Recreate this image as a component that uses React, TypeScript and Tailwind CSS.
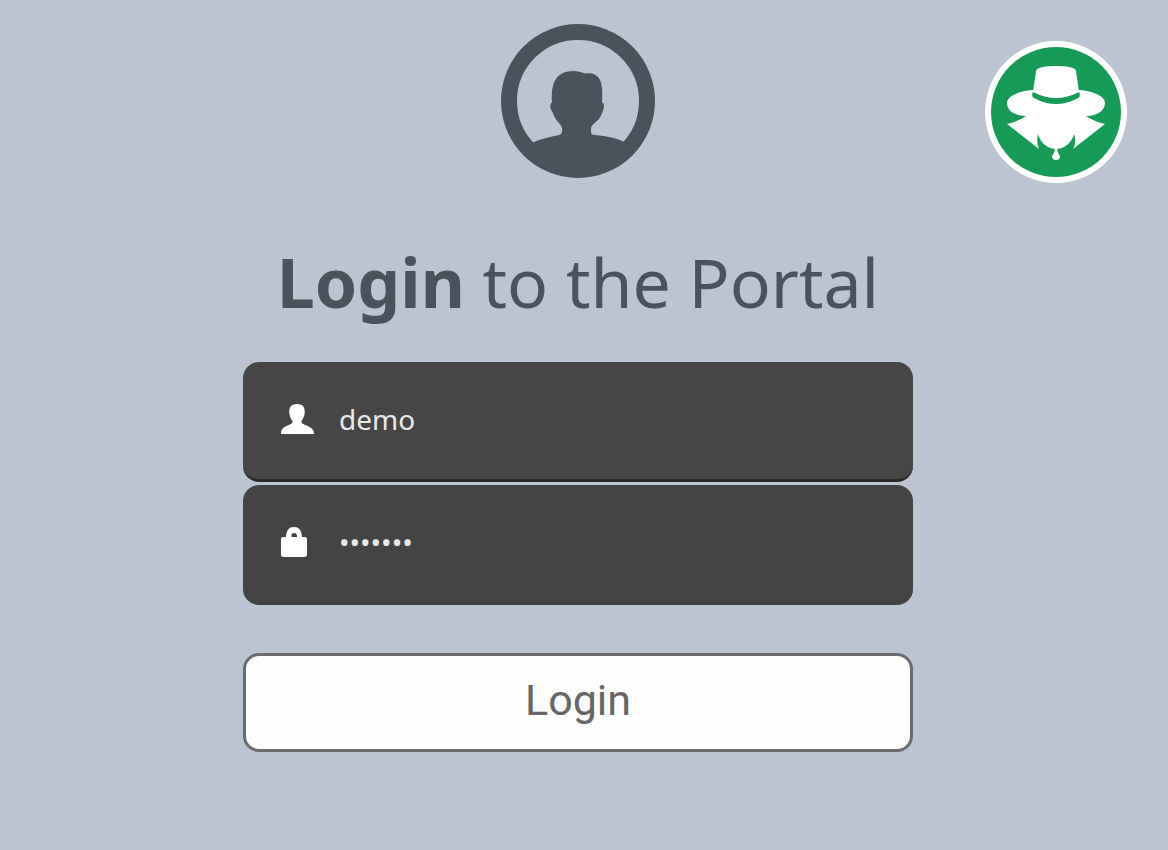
import { useState } from "react";
import type { ReactNode } from "react";

const AvatarIcon = () => (
  <svg viewBox="0 0 154 154" className="size-[154px] text-[#4a525b]" fill="currentColor" aria-hidden="true">
    <circle cx="77" cy="77" r="69" fill="none" stroke="currentColor" strokeWidth="16" />
    <path d="M29 120C38 115 49 113 58 111Q62 110 61 104C60 99 54 97 52 89Q47 82 51 78C50 60 54 47 73 47Q79 47 84 49.500C97 48 103 55 101 78Q105 80 101 89C99 97 91 99 90 104V108Q90 111 94 111C106 112 116 114 125 119C116 138 99 147 77 147S38 138 29 120Z" />
  </svg>
);

const DetectiveLogo = () => (
  <svg viewBox="0 0 142 142" className="size-[142px]" aria-hidden="true">
    <circle cx="71" cy="71" r="71" fill="#fff" />
    <circle cx="71" cy="71" r="65" fill="#169b56" />
    {/* brim, collar and face */}
    <path
      fill="#fff"
      d="M48 49C34 50 22 55 22 62C22 69 29 75 41 75Q34 80 22 83L54 108Q51 101 53 93C55 101 62 108 71 108S87 101 89 93Q92 101 88 108L120 83Q108 80 101 75C113 75 120 69 120 62C120 55 108 50 94 49Z"
    />
    <path fill="#169b56" d="M48 50Q46 56 49 57Q71 69 93 57Q96 56 94 50Q71 62 48 50Z" />
    <path fill="#fff" d="M51 30Q52 25 71 25T91 30L94 51Q71 63 48 51Z" />
    <path fill="#fff" d="M70 106C70 112 67 114 67 116C67 120 75 120 75 116C75 114 72 112 72 106Z" />
  </svg>
);

const UserIcon = () => (
  <svg viewBox="0 0 34 32" className="h-8 w-[34px]" fill="currentColor" aria-hidden="true">
    <path d="M17 1C11 1 9 4.500 9.300 9.500C9.500 13.500 11 16 12.500 18C12.800 20.500 11 21 7.500 22.500C3 24.500 1 26 1 31H34C34 26 31 24.500 26.500 22.500C23 21 21.200 20.500 21.500 18C23 15.500 24.500 13.500 24.700 9.500C25 4.500 23 1 17 1Z" />
  </svg>
);

const LockIcon = () => (
  <svg viewBox="0 0 34 32" className="h-8 w-[34px]" fill="currentColor" aria-hidden="true">
    <path
      fillRule="evenodd"
      d="M6 11C6.500 4 9 1 14 1S21.500 4 22 11H24Q27 11 27 13V28.500Q27 31 24 31H4Q1 31 1 28.500V13Q1 11 4 11ZM11.500 11H17V10Q17 7 14 7T11.500 10Z"
    />
  </svg>
);

interface FieldProps {
  id: string;
  label: string;
  type: "text" | "password";
  value: string;
  icon: ReactNode;
  onChange: (value: string) => void;
}

const Field = ({ id, label, type, value, icon, onChange }: FieldProps) => (
  <div className="flex h-[120px] items-center gap-[25px] rounded-2xl border-b-3 border-[#292929] bg-[#464646] pb-1 pl-[37px] pr-6 text-white last:border-[#414141] last:bg-[#444]">
    <label htmlFor={id} aria-label={label}>
      {icon}
    </label>
    <input
      id={id}
      type={type}
      value={value}
      onChange={(e) => onChange(e.target.value)}
      className="min-w-0 flex-1 bg-transparent font-['Noto_Sans',sans-serif] text-[28px] leading-10 text-[#e8e8e8] outline-none"
    />
  </div>
);

export default function App() {
  const [username, setUsername] = useState("demo");
  const [password, setPassword] = useState("demo123");

  return (
    <div className="relative min-h-screen bg-[#bcc4d1] pb-12">
      <div className="absolute right-[41px] top-[41px]">
        <DetectiveLogo />
      </div>

      <main className="flex flex-col items-center pr-3 pt-6">
        <AvatarIcon />
        <h1 className="mt-14 whitespace-nowrap font-['Noto_Sans',sans-serif] text-[68px] leading-[96px] text-[#4a525b]">
          <strong className="font-bold">Login</strong> to the Portal
        </h1>

        <form className="mt-8 w-full max-w-[670px]" onSubmit={(e) => e.preventDefault()}>
          <div className="flex flex-col gap-[3px]">
            <Field id="username" label="Username" type="text" value={username} icon={<UserIcon />} onChange={setUsername} />
            <Field id="password" label="Password" type="password" value={password} icon={<LockIcon />} onChange={setPassword} />
          </div>
          <button
            type="submit"
            className="mt-12 h-[99px] w-full rounded-2xl border-3 border-[#696b6e] bg-[#fdfdfb] pb-1 font-[Roboto,sans-serif] text-[43px] leading-none text-[#666]"
          >
            Login
          </button>
        </form>
      </main>
    </div>
  );
}
